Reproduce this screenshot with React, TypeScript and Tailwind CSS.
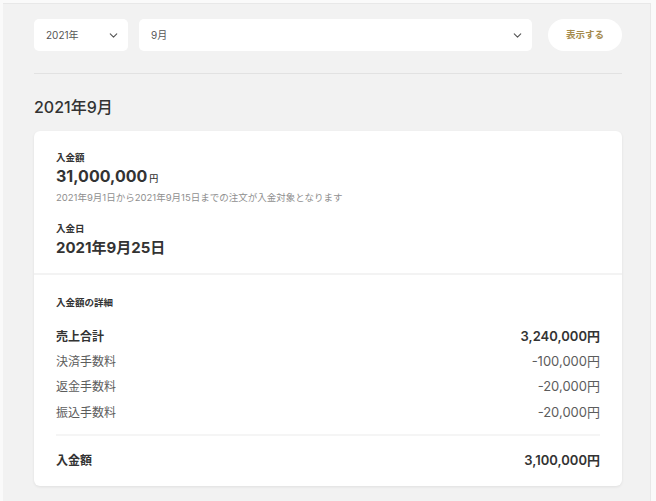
import React from "react";

const font = { fontFamily: 'Inter, "Noto Sans CJK JP", sans-serif' };

function Chevron() {
  return (
    <svg width="13" height="13" viewBox="0 0 24 24" fill="none" stroke="#555" strokeWidth="2" strokeLinecap="round" strokeLinejoin="round">
      <path d="m6 9 6 6 6-6" />
    </svg>
  );
}

function Select({ label, className }: { label: string; className: string }) {
  return (
    <div className={`flex h-[32px] items-center justify-between rounded-[5px] bg-white pl-[12px] pr-[8px] text-[10px] text-[#555] ${className}`}>
      <span>{label}</span>
      <Chevron />
    </div>
  );
}

const rows = [
  { label: "売上合計", value: "3,240,000円", bold: true },
  { label: "決済手数料", value: "-100,000円", bold: false },
  { label: "返金手数料", value: "-20,000円", bold: false },
  { label: "振込手数料", value: "-20,000円", bold: false },
];

export default function App() {
  return (
    <div className="h-[501px] w-full overflow-hidden bg-[#fafafa] pt-[3px] pl-[3px] pr-[5px]" style={font}>
      <div className="h-full border-t border-r border-[#e8e8e8] bg-[#f2f2f2] pl-[31px] pr-[28px] pt-[15px]">
        <div className="flex items-center">
          <Select label="2021年" className="w-[94px]" />
          <Select label="9月" className="ml-[11px] flex-1" />
          <button className="ml-[16px] h-[32px] w-[74px] rounded-full bg-white text-[9.5px] font-semibold text-[#a58a4c]">
            表示する
          </button>
        </div>
        <div className="mt-[22px] h-px bg-[#e2e2e2]" />
        <h1 className="mt-[23px] text-[16px] font-medium leading-[20px] text-[#333]">2021年9月</h1>
        <div className="mt-[14px] rounded-[6px] bg-white shadow-[0_1px_3px_rgba(0,0,0,0.08)]">
          <div className="px-[22px] pt-[21px] pb-[15px]">
            <div className="text-[9.5px] font-bold leading-[12px] text-[#333]">入金額</div>
            <div className="mt-[1px] flex items-baseline leading-[22px] text-[#333]">
              <span className="text-[16px] font-bold">31,000,000</span>
              <span className="ml-[2px] text-[9px] font-medium">円</span>
            </div>
            <div className="mt-[1px] text-[9.5px] leading-[14px] text-[#8f8f8f]">
              2021年9月1日から2021年9月15日までの注文が入金対象となります
            </div>
            <div className="mt-[18px] text-[9.5px] font-bold leading-[12px] text-[#333]">入金日</div>
            <div className="mt-[3px] text-[15px] font-bold leading-[20px] text-[#333]">2021年9月25日</div>
          </div>
          <div className="h-[2px] bg-[#f3f3f3]" />
          <div className="px-[22px] pt-[22px] pb-[13px]">
            <div className="text-[9.5px] font-bold leading-[12px] text-[#333]">入金額の詳細</div>
            <div className="mt-[15px]">
              {rows.map((r) => (
                <div
                  key={r.label}
                  className={`flex h-[25.3px] items-center justify-between ${r.bold ? "font-semibold text-[#333]" : "text-[#5c5c5c]"}`}
                >
                  <span className="text-[12px]">{r.label}</span>
                  <span className="text-[13px]">{r.value}</span>
                </div>
              ))}
            </div>
            <div className="mt-[9px] h-[2px] bg-[#f5f5f5]" />
            <div className="mt-[12px] flex h-[25px] items-center justify-between font-semibold text-[#333]">
              <span className="text-[12px]">入金額</span>
              <span className="text-[13px]">3,100,000円</span>
            </div>
          </div>
        </div>
      </div>
    </div>
  );
}
